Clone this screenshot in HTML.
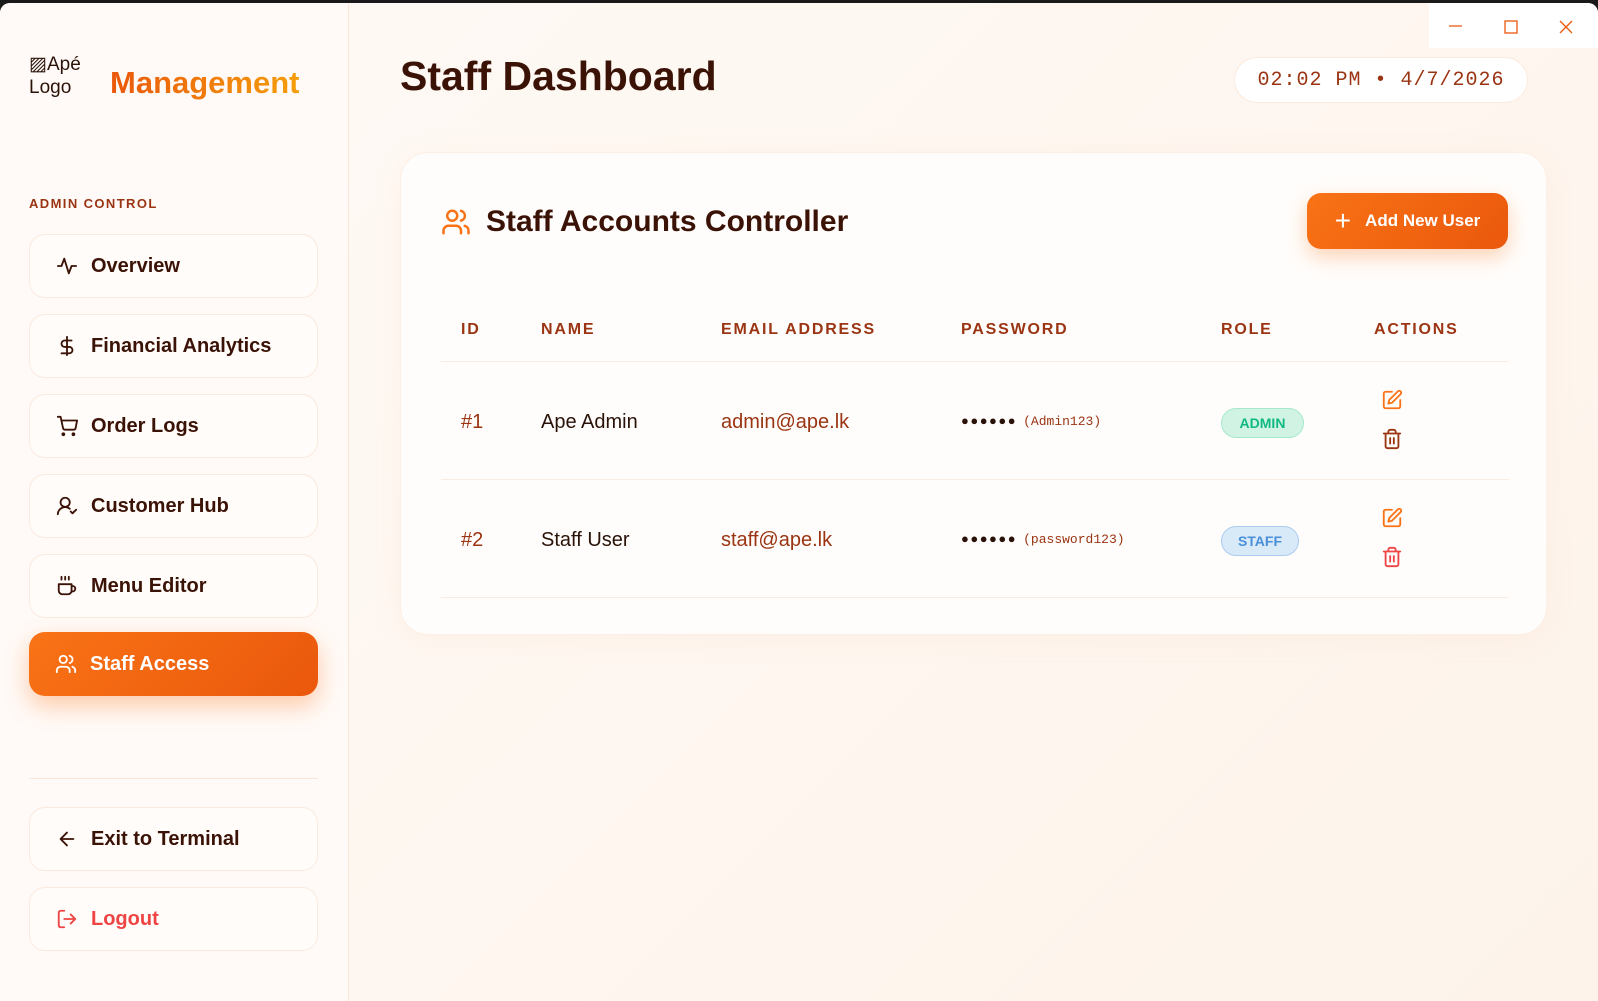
<!DOCTYPE html>
<html><head><meta charset="utf-8"><style>
*{box-sizing:border-box;margin:0;padding:0}
body{width:1598px;height:1001px;overflow:hidden;font-family:"Liberation Sans",Arial,sans-serif;background:#1a1a1a;position:relative}
.app{position:absolute;left:0;top:3px;width:1598px;height:998px;border-radius:10px 10px 0 0;overflow:hidden;background:linear-gradient(135deg,#fffaf6 0%,#fdf3ea 100%)}
.side{position:absolute;left:0;top:0;width:349px;height:998px;background:#fffaf7;border-right:1px solid #fbe7da}
.logo{position:absolute;left:29px;top:50px;font-size:19px;color:#2a1208;line-height:23px}
.mgmt{position:absolute;left:110px;top:62px;font-size:31px;font-weight:bold;background:linear-gradient(90deg,#ea580c,#f59e0b);-webkit-background-clip:text;color:transparent}
.sec{position:absolute;left:29px;top:193px;font-size:13px;font-weight:bold;letter-spacing:1.4px;color:#9a3412}
.nav{position:absolute;left:29px;width:289px;height:64px;border:1px solid #fbe9dd;border-radius:16px;background:#fffcfa;display:flex;align-items:center;padding-left:26px;font-size:20px;font-weight:bold;color:#3b1206}
.nav svg{width:22px;height:22px;margin-right:13px;fill:none;stroke:currentColor;stroke-width:2;stroke-linecap:round;stroke-linejoin:round}
.nav.act{background:linear-gradient(135deg,#f97316,#ea580c);color:#fff;border:none;box-shadow:0 10px 24px rgba(249,115,22,.35)}
.divd{position:absolute;left:29px;top:775px;width:289px;height:1px;background:#fbe7da}
.title{position:absolute;left:400px;top:50px;font-size:41px;font-weight:bold;color:#3b1206}
.time{position:absolute;left:1234px;top:54px;width:294px;height:46px;border-radius:23px;background:#fff;border:1px solid #fbeadf;font-family:"Liberation Mono",monospace;font-size:20px;color:#9a3412;display:flex;align-items:center;justify-content:center;letter-spacing:1px}
.win{position:absolute;left:1429px;top:0;width:169px;height:45px;background:#fff}
.card{position:absolute;left:400px;top:149px;width:1147px;height:483px;background:#fffdfb;border-radius:28px;border:1px solid #fcefe5;box-shadow:0 4px 30px rgba(240,160,110,.08)}
.ch{position:absolute;left:85px;top:52px;font-size:30px;font-weight:bold;color:#3b1206}
.btn{position:absolute;left:906px;top:40px;width:201px;height:56px;border-radius:14px;background:linear-gradient(135deg,#f97316,#ea580c);color:#fff;font-size:17px;font-weight:bold;display:flex;align-items:center;justify-content:center;box-shadow:0 8px 20px rgba(249,115,22,.3)}
.th{position:absolute;top:168px;font-size:16px;font-weight:bold;letter-spacing:1.8px;color:#9a3412}
.line{position:absolute;left:40px;width:1068px;height:1px;background:#fbece2}
.td{position:absolute;font-size:20px;color:#2a1208}
.mono{font-family:"Liberation Mono",monospace;font-size:13px;color:#9a3412;margin-left:6px}
.badge{position:absolute;height:30px;border-radius:15px;font-size:14px;font-weight:bold;display:flex;align-items:center;justify-content:center}
.ic{position:absolute;width:22px;height:22px;fill:none;stroke-width:2;stroke-linecap:round;stroke-linejoin:round}
</style></head><body>
<div class="app">
<div class="side">
<div class="logo">▨Apé<br>Logo</div>
<div class="mgmt">Management</div>
<div class="sec">ADMIN CONTROL</div>
<div class="nav" style="top:231px"><svg viewBox="0 0 24 24"><path d="M2 12h4l3-8 5 16 3-8h5"/></svg>Overview</div>
<div class="nav" style="top:311px"><svg viewBox="0 0 24 24"><path d="M12 2v20M17 6H9.5a3.5 3.5 0 0 0 0 7h5a3.5 3.5 0 0 1 0 7H6"/></svg>Financial Analytics</div>
<div class="nav" style="top:391px"><svg viewBox="0 0 24 24"><circle cx="8" cy="21" r="1"/><circle cx="19" cy="21" r="1"/><path d="M2 2h3l2.7 12.4a2 2 0 0 0 2 1.6h9.7a2 2 0 0 0 2-1.6L23 6H6"/></svg>Order Logs</div>
<div class="nav" style="top:471px"><svg viewBox="0 0 24 24"><path d="M2 21a8 8 0 0 1 13-6"/><circle cx="10" cy="8" r="5"/><path d="M16 18l2 2 4-4"/></svg>Customer Hub</div>
<div class="nav" style="top:551px"><svg viewBox="0 0 24 24"><path d="M3 10h14v7a4 4 0 0 1-4 4H7a4 4 0 0 1-4-4zM17 12h1a3 3 0 0 1 0 6h-1M6 2v3M10 2v3M14 2v3"/></svg>Menu Editor</div>
<div class="nav act" style="top:629px"><svg viewBox="0 0 24 24"><path d="M16 21v-2a4 4 0 0 0-4-4H6a4 4 0 0 0-4 4v2"/><circle cx="9" cy="7" r="4"/><path d="M22 21v-2a4 4 0 0 0-3-3.9M16 3.1a4 4 0 0 1 0 7.8"/></svg>Staff Access</div>
<div class="divd"></div>
<div class="nav" style="top:804px"><svg viewBox="0 0 24 24"><path d="M19 12H5M12 19l-7-7 7-7"/></svg>Exit to Terminal</div>
<div class="nav" style="top:884px;color:#ef4444"><svg viewBox="0 0 24 24"><path d="M9 21H5a2 2 0 0 1-2-2V5a2 2 0 0 1 2-2h4M16 17l5-5-5-5M21 12H9"/></svg>Logout</div>
</div>
<div class="title">Staff Dashboard</div>
<div class="time">02:02 PM • 4/7/2026</div>
<div class="win"><svg width="169" height="45" style="position:absolute;left:0;top:0" fill="none" stroke="#ea580c" stroke-width="1.3"><path d="M20 23h13"/><rect x="76" y="18" width="12" height="12"/><path d="M131 18l12 12M143 18l-12 12"/></svg></div>
<div class="card">
<svg class="ic" style="left:40px;top:54px;width:30px;height:30px;stroke:#f97316" viewBox="0 0 24 24"><path d="M16 21v-2a4 4 0 0 0-4-4H6a4 4 0 0 0-4 4v2"/><circle cx="9" cy="7" r="4"/><path d="M22 21v-2a4 4 0 0 0-3-3.9M16 3.1a4 4 0 0 1 0 7.8"/></svg>
<div class="ch">Staff Accounts Controller</div>
<div class="btn"><span style="font-size:28px;font-weight:normal;margin-right:14px;line-height:1">+</span>Add New User</div>
<div class="th" style="left:60px">ID</div>
<div class="th" style="left:140px">NAME</div>
<div class="th" style="left:320px">EMAIL ADDRESS</div>
<div class="th" style="left:560px">PASSWORD</div>
<div class="th" style="left:820px">ROLE</div>
<div class="th" style="left:973px">ACTIONS</div>
<div class="line" style="top:208px"></div>
<div class="td" style="left:60px;top:258px;color:#9a3412">#1</div>
<div class="td" style="left:140px;top:258px">Ape Admin</div>
<div class="td" style="left:320px;top:258px;color:#9a3412">admin@ape.lk</div>
<div class="td" style="left:560px;top:260px;font-size:13px;letter-spacing:1.5px">●●●●●●<span class="mono" style="letter-spacing:0">(Admin123)</span></div>
<div class="badge" style="left:820px;top:255px;width:83px;background:#d1f3e4;border:1px solid #a7e8cc;color:#10b981">ADMIN</div>
<svg class="ic" style="left:980px;top:236px;stroke:#f97316" viewBox="0 0 24 24"><path d="M12 3H5a2 2 0 0 0-2 2v14a2 2 0 0 0 2 2h14a2 2 0 0 0 2-2v-7"/><path d="M18.4 2.6a2.1 2.1 0 0 1 3 3L12 15l-4 1 1-4z"/></svg>
<svg class="ic" style="left:980px;top:275px;stroke:#9a3412" viewBox="0 0 24 24"><path d="M3 6h18M19 6v14a2 2 0 0 1-2 2H7a2 2 0 0 1-2-2V6M8 6V4a2 2 0 0 1 2-2h4a2 2 0 0 1 2 2v2M10 11v6M14 11v6"/></svg>
<div class="line" style="top:326px"></div>
<div class="td" style="left:60px;top:376px;color:#9a3412">#2</div>
<div class="td" style="left:140px;top:376px">Staff User</div>
<div class="td" style="left:320px;top:376px;color:#9a3412">staff@ape.lk</div>
<div class="td" style="left:560px;top:378px;font-size:13px;letter-spacing:1.5px">●●●●●●<span class="mono" style="letter-spacing:0">(password123)</span></div>
<div class="badge" style="left:820px;top:373px;width:78px;background:#d8e9f8;border:1px solid #aacdf0;color:#4a90d9">STAFF</div>
<svg class="ic" style="left:980px;top:354px;stroke:#f97316" viewBox="0 0 24 24"><path d="M12 3H5a2 2 0 0 0-2 2v14a2 2 0 0 0 2 2h14a2 2 0 0 0 2-2v-7"/><path d="M18.4 2.6a2.1 2.1 0 0 1 3 3L12 15l-4 1 1-4z"/></svg>
<svg class="ic" style="left:980px;top:393px;stroke:#ef4444" viewBox="0 0 24 24"><path d="M3 6h18M19 6v14a2 2 0 0 1-2 2H7a2 2 0 0 1-2-2V6M8 6V4a2 2 0 0 1 2-2h4a2 2 0 0 1 2 2v2M10 11v6M14 11v6"/></svg>
<div class="line" style="top:444px"></div>
</div>
</div>
</body></html>
